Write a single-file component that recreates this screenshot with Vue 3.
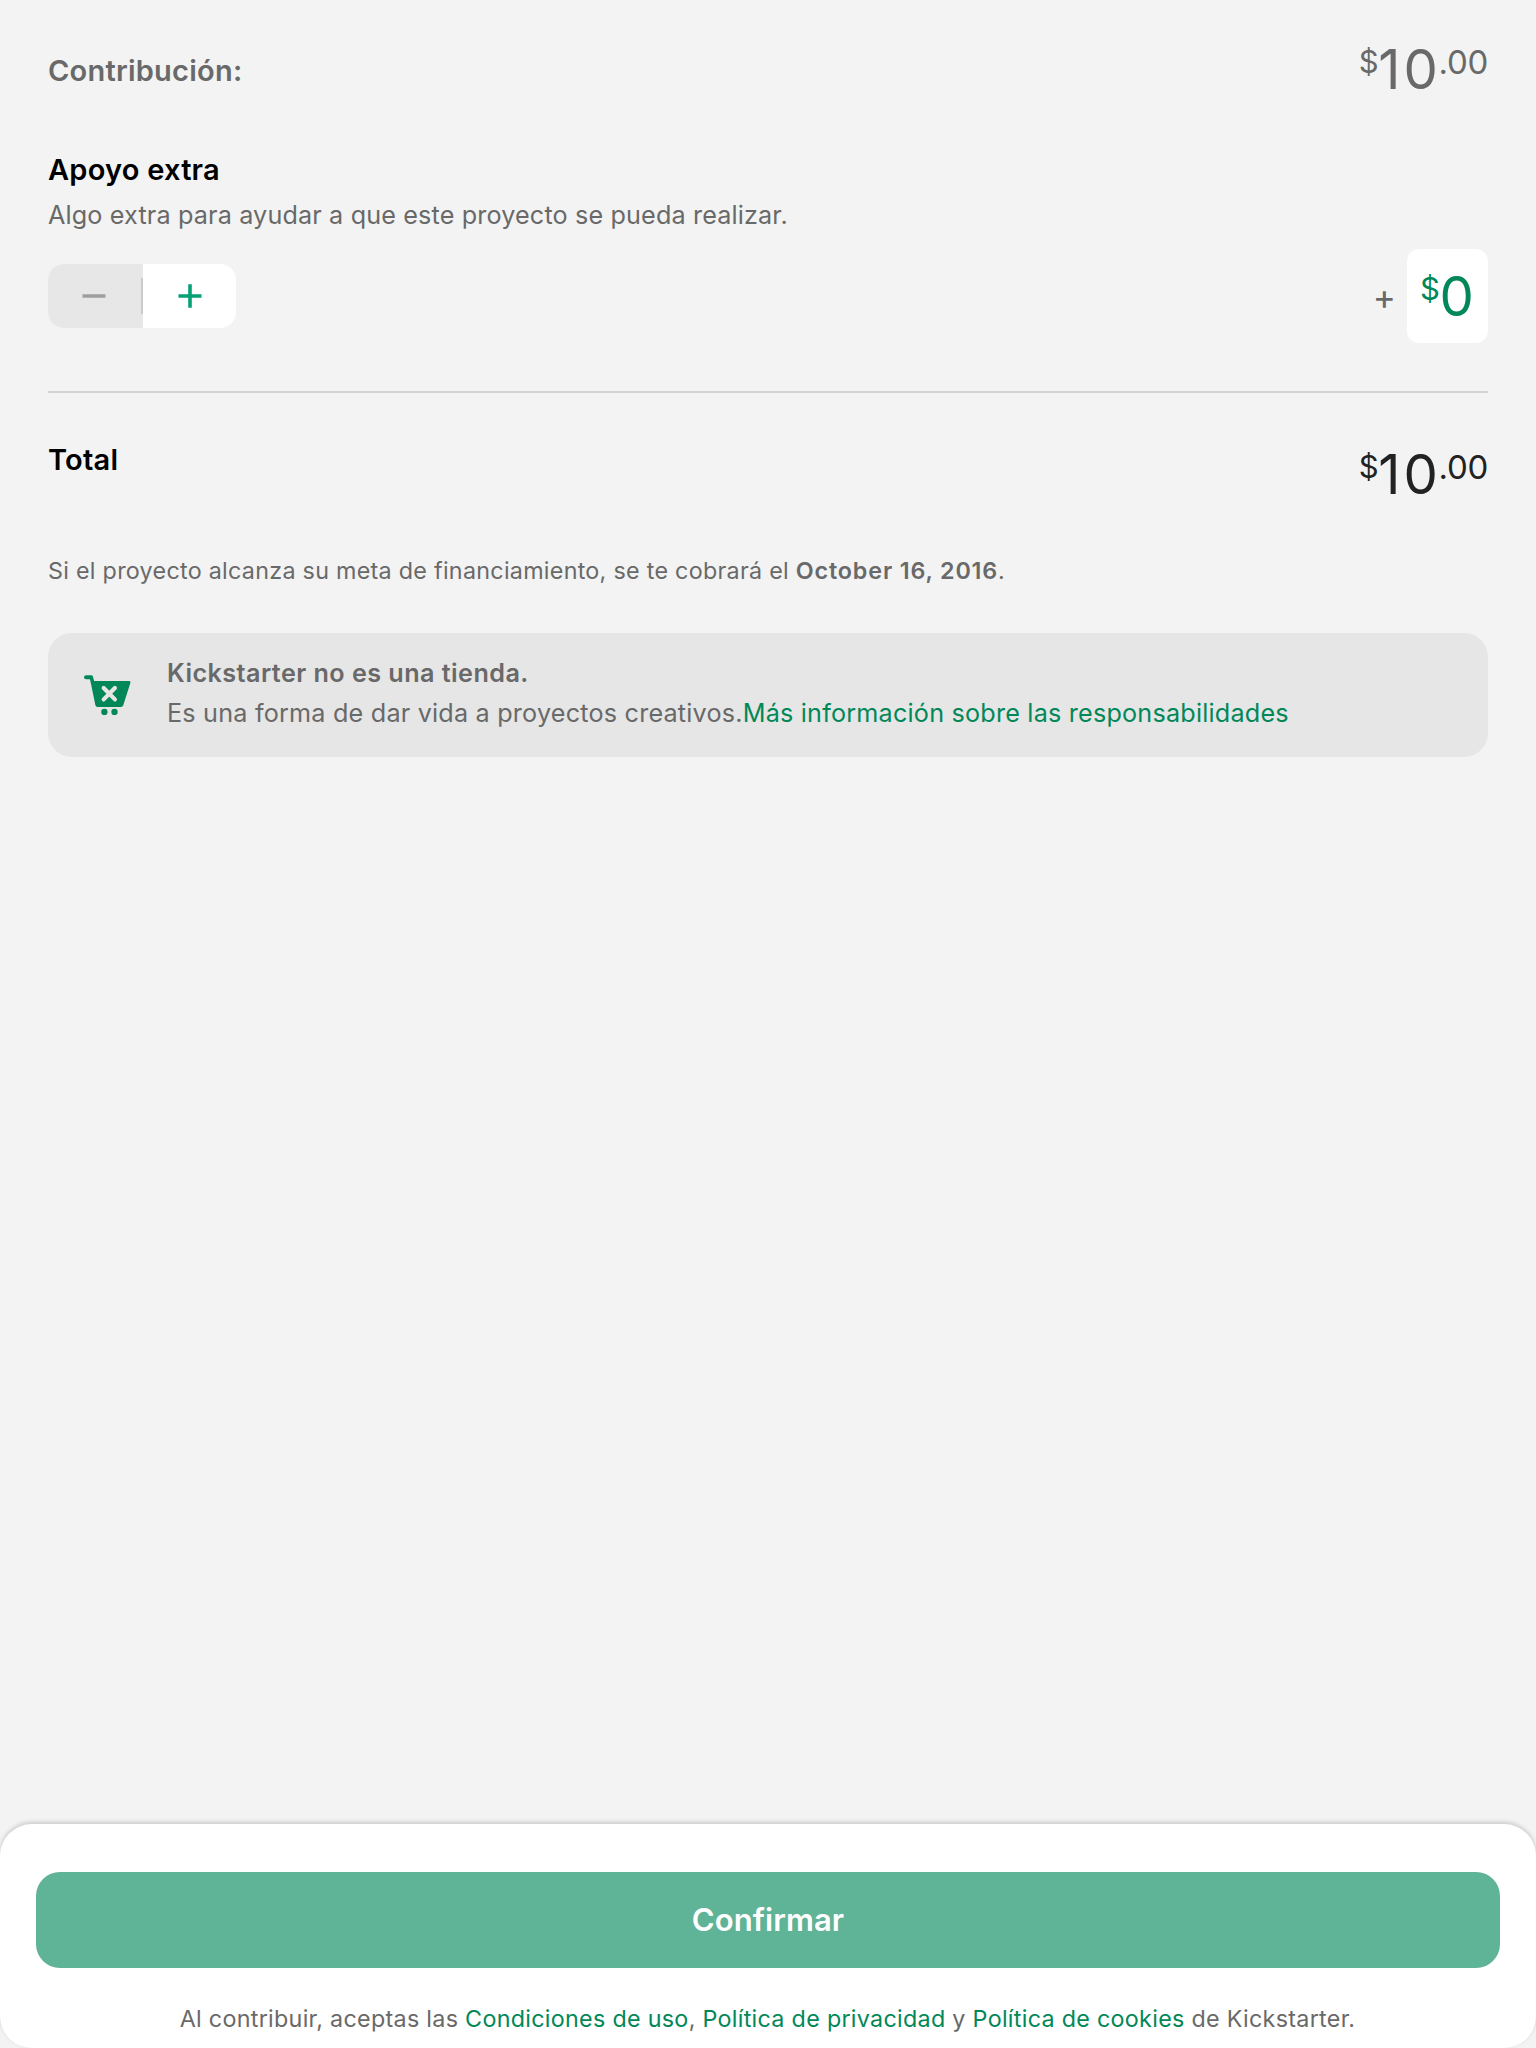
<script setup>
import { ref, computed } from 'vue'

const pledge = 10
const bonus = ref(0)
const total = computed(() => pledge + bonus.value)
</script>

<template>
  <div class="screen">
    <main class="content">
      <section class="row contribution">
        <h2 class="headline muted">Contribución:</h2>
        <p class="price muted"><span class="currency">$</span><span class="whole">{{ pledge }}</span><span class="cents">.00</span></p>
      </section>

      <section class="bonus">
        <h2 class="headline">Apoyo extra</h2>
        <p class="hint">Algo extra para ayudar a que este proyecto se pueda realizar.</p>
        <div class="bonus-controls">
          <div class="stepper">
            <button class="step minus" aria-label="Menos" :disabled="bonus === 0" @click="bonus--">
              <svg width="24" height="24" viewBox="0 0 24 24"><path d="M0.5 12H23.5" /></svg>
            </button>
            <button class="step plus" aria-label="Más" @click="bonus++">
              <svg width="24" height="24" viewBox="0 0 24 24"><path d="M0.5 12H23.5M12 0.3V23.7" /></svg>
            </button>
          </div>
          <div class="bonus-amount">
            <span class="plus-sign">+</span>
            <p class="price field"><span class="currency">$</span><span class="whole">{{ bonus }}</span></p>
          </div>
        </div>
      </section>

      <hr class="rule" />

      <section class="row total">
        <h2 class="headline">Total</h2>
        <p class="price"><span class="currency">$</span><span class="whole">{{ total }}</span><span class="cents">.00</span></p>
      </section>

      <p class="charge">Si el proyecto alcanza su meta de financiamiento, se te cobrará el <b>October 16, 2016</b>.</p>

      <aside class="notice">
        <svg class="cart" width="48" height="40" viewBox="0 0 48 40">
          <path d="M2 0.2H7.1Q8.6 0.2 8.9 1.6L10.1 6H45.2Q46.9 6 46.4 7.7L39.3 30.3Q38.6 32 36.9 32H13.6Q11.8 32 11.4 30.2L6.4 6L5.8 4.2H2A2 2 0 0 1 2 0.2Z" fill="#028858" />
          <path d="M19.7 13L30.9 24.4M30.9 13L19.7 24.4" stroke="#e6e6e6" stroke-width="4.2" stroke-linecap="round" />
          <circle cx="20.4" cy="37" r="3.2" fill="#028858" />
          <circle cx="30.5" cy="37" r="3.2" fill="#028858" />
        </svg>
        <div class="notice-text">
          <p class="notice-title">Kickstarter no es una tienda.</p>
          <p class="notice-body">Es una forma de dar vida a proyectos creativos.<a>Más información sobre las responsabilidades</a></p>
        </div>
      </aside>
    </main>

    <footer class="footer">
      <button class="confirm">Confirmar</button>
      <p class="terms">Al contribuir, aceptas las <a>Condiciones de uso</a>, <a>Política de privacidad</a> y <a>Política de cookies</a> de Kickstarter.</p>
    </footer>
  </div>
</template>

<style>
body {
  margin: 0;
  background: #f3f3f3;
}
</style>

<style scoped>
.screen {
  box-sizing: border-box;
  width: 1536px;
  height: 2048px;
  display: flex;
  flex-direction: column;
  overflow: hidden;
  background: #f3f3f3;
  color: #000;
  font-family: Inter, "Noto Sans", sans-serif;
}
h2, p, hr { margin: 0; }
p { white-space: nowrap; }
button {
  border: 0;
  padding: 0;
  font-family: inherit;
}
a { color: #028858; }

.content {
  flex: 1;
  display: flex;
  flex-direction: column;
  padding: 39px 48px 0;
}
.row {
  display: flex;
  justify-content: space-between;
  align-items: flex-start;
}
.headline {
  font-size: 29px;
  line-height: 36px;
  font-weight: 600;
  letter-spacing: 0.23px;
}
.contribution { height: 60px; }
.contribution .headline { padding-top: 14px; }

.price {
  height: 60px;
  font-size: 54.5px;
  line-height: 60px;
  color: #222;
}
.headline.muted, .price.muted { color: #696969; }
.currency, .cents { line-height: 0; }
.currency {
  font-size: 31px;
  vertical-align: 16px;
  letter-spacing: -0.5px;
}
.whole {
  letter-spacing: 3px;
  margin-right: -2.2px;
}
.cents {
  font-size: 33px;
  vertical-align: 15px;
  letter-spacing: -0.3px;
}

.bonus { padding-top: 53px; }
.hint {
  padding-top: 11px;
  font-size: 25.2px;
  line-height: 32px;
  letter-spacing: 0.14px;
  color: #696969;
}
.bonus-controls {
  display: flex;
  justify-content: space-between;
  align-items: center;
  height: 94px;
  padding-top: 18px;
}
.stepper {
  display: flex;
  width: 188px;
  height: 64px;
  border-radius: 16px;
  overflow: hidden;
  background: #fff;
}
.step {
  display: flex;
  align-items: center;
  justify-content: center;
}
.step svg {
  fill: none;
  stroke: currentColor;
  stroke-width: 3.6;
}
.minus {
  box-sizing: border-box;
  width: 95px;
  padding-right: 3px;
  background: linear-gradient(#cbcbcb, #cbcbcb) right center / 2px 36px no-repeat #e7e7e7;
  color: #9b9f9d;
}
.plus {
  width: 93px;
  background: #fff;
  color: #05a076;
}
.bonus-amount {
  display: flex;
  align-items: center;
}
.plus-sign {
  font-size: 35px;
  line-height: 36px;
  padding: 0 11px 0 0;
  color: #696969;
}
.field {
  box-sizing: border-box;
  width: 81px;
  height: 94px;
  padding: 17px 0 0 13px;
  border-radius: 12px;
  background: #fff;
  color: #028858;
}
.rule {
  height: 2px;
  margin-top: 48px;
  border: 0;
  background: #d1d1d1;
}
.total { height: 63px; padding-top: 49px; }
.total .price { margin-top: 2px; }

.charge {
  padding-top: 50px;
  font-size: 23.3px;
  line-height: 32px;
  letter-spacing: 0.28px;
  color: #696969;
}
.charge b {
  font-weight: 600;
  letter-spacing: 0.86px;
}
.notice {
  box-sizing: border-box;
  display: flex;
  height: 124px;
  margin-top: 46px;
  padding: 0 36px;
  border-radius: 24px;
  background: #e6e6e6;
}
.cart {
  flex: none;
  margin: 42px 35px 0 0;
}
.notice-text {
  display: flex;
  flex-direction: column;
  padding-top: 20px;
  font-size: 25.2px;
  line-height: 40px;
  color: #696969;
}
.notice-title {
  font-weight: 600;
  letter-spacing: 0.44px;
}
.notice-body { letter-spacing: 0.2px; }

.footer {
  box-sizing: border-box;
  height: 224px;
  padding: 48px 36px 0;
  border-radius: 32px;
  background: #fff;
  box-shadow: 0 -2px 4px rgba(0, 0, 0, 0.17);
}
.confirm {
  display: block;
  width: 100%;
  height: 96px;
  padding-bottom: 2px;
  border-radius: 24px;
  background: #5fb396;
  color: #fff;
  font-size: 31px;
  font-weight: 600;
  letter-spacing: 0.08px;
}
.terms {
  padding: 35px 1px 0 0;
  font-size: 23.3px;
  line-height: 32px;
  letter-spacing: 0.295px;
  text-align: center;
  color: #696969;
}
</style>
